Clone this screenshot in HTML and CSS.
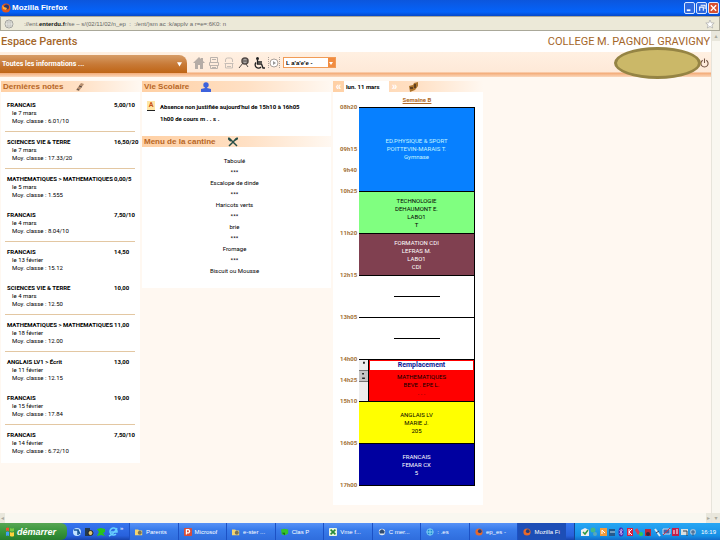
FILE: index.html
```html
<!DOCTYPE html>
<html lang="fr">
<head>
<meta charset="utf-8">
<title>Espace Parents</title>
<link rel="stylesheet" href="styles.css">
</head>
<body>
<header class="titlebar">
  <svg class="fox" viewBox="0 0 10 10"><circle cx="5" cy="5" r="4.5" fill="#e0571c"/><circle cx="5.5" cy="4" r="2.5" fill="#26386e"/><path d="M1 2l2 2 3 1-1 2-3-1z" fill="#ffb03b"/></svg>
  <span>Mozilla Firefox</span>
  <div class="winbtns">
    <button aria-label="Réduire"><svg viewBox="0 0 10 10"><path d="M2 7.5h4" stroke="#fff" stroke-width="2"/></svg></button>
    <button aria-label="Restaurer"><svg viewBox="0 0 10 10"><path d="M3 8V4h4v4M4 2h5v4" stroke="#fff" fill="none" stroke-width="1.2"/></svg></button>
    <button class="close" aria-label="Fermer"><svg viewBox="0 0 10 10"><path d="M2 2l6 6M8 2l-6 6" stroke="#fff" stroke-width="1.5"/></svg></button>
  </div>
</header>
<div class="urlbar">
  <svg class="globe" viewBox="0 0 10 10"><circle cx="5" cy="5" r="4" fill="#c4c4bf" stroke="#a5a5a0"/><path d="M5 1v8M1 5h8M3 2q-1 3 0 6M7 2q1 3 0 6" stroke="#f0f0ea" stroke-width=".6" fill="none"/></svg>
  <p class="url">://ent.<b>enterdu.f</b>r/se – s/(02/11/02/n_ep  :  :/ent/)sm ac :k/applv a r=e=:6K0: n</p>
  <svg class="star" viewBox="0 0 10 10"><path d="M5 1l1.2 2.8 3 .2-2.3 2 .8 3L5 7.4 2.3 9l.8-3L.8 4l3-.2z" fill="#fff" stroke="#aaa" stroke-width=".7"/></svg>
</div>
<div class="viewport">
  <div class="page">
    <div class="heading"><h1>Espace Parents</h1><p>COLLEGE M. PAGNOL GRAVIGNY</p></div>
    <nav class="toolbar">
      <button class="tab"><span>Toutes les informations ...</span><svg viewBox="0 0 6 6"><path d="M0 1h6L3 6z" fill="#fff"/></svg></button>
      <div class="tools">
        <svg viewBox="0 0 12 12"><path d="M6 0L0 6h2v6h3V8h2v4h3V6h2L10 4V1H8v1z" fill="#b5aca6"/></svg>
        <svg viewBox="0 0 12 12"><path d="M2.500 5V.5h7V5M1.500 5.500h9v3h-9zM2.500 8.500v3h7v-3M4 2.500h4M4 10.500h4" fill="none" stroke="#bbb3ad"/></svg>
        <svg viewBox="0 0 12 12"><path d="M2.500 5V3q0-2 2-2h3q2 0 2 2v2M1.500 6.500h9M2.500 7v4h7V7M4 9.500h4" fill="none" stroke="#c7beb7"/></svg>
        <svg viewBox="0 0 12 12"><circle cx="7" cy="4" r="3" fill="#fff" stroke="#504844" stroke-width="1.500"/><path d="M6 2v4M8 2v4M5 4h5M5 6L1 11M8 7l2 3" stroke="#504844"/></svg>
        <svg viewBox="0 0 12 12"><circle cx="4.500" cy="1.500" r="1.500" fill="#222"/><path d="M4.500 3v4h4l1.500 4h2M5 5h4M3 5.500a3.200 3.200 0 1 0 5 4.500" fill="none" stroke="#222" stroke-width="1.300"/></svg>
        <svg viewBox="0 0 12 12"><path d="M.5 0v12M11.500 0v12" stroke="#a9a099" stroke-dasharray="1 1"/><circle cx="6" cy="6" r="4" fill="#fff" stroke="#aaa199"/><path d="M5 4l3 2-3 2z" fill="#999"/></svg>
      </div>
      <div class="pickbox"><select class="pick" aria-label="Élève"><option>L a'a'e'e -</option></select><svg viewBox="0 0 6 6"><path d="M1 2h4L3 5z" fill="#fff"/></svg></div>
      <div class="account"><svg viewBox="0 0 10 10"><path d="M3 2a4 4 0 1 0 4 0M5 0v5" fill="none" stroke="#725342" stroke-width="1.200"/></svg><span class="mask"></span></div>
    </nav>
    <main class="columns">
      <section class="notes">
        <h2>Dernières notes <svg class="pen" viewBox="0 0 10 10"><path d="M1 8L6 1l3 1-5 7z" fill="#b78f70"/><path d="M2 7l2 1M4 4l3 1" stroke="#554a44"/></svg></h2>
        <ul class="card">
          <li><b>FRANCAIS</b><b>5,00/10</b><p>le 7 mars</p><p>Moy. classe : 6.01/10</p></li>
          <li><b>SCIENCES VIE &amp; TERRE</b><b>16,50/20</b><p>le 7 mars</p><p>Moy. classe : 17.33/20</p></li>
          <li class="plain"><b>MATHEMATIQUES &gt; MATHEMATIQUES</b><b>0,00/5</b><p>le 5 mars</p><p>Moy. classe : 1.555</p></li>
          <li><b>FRANCAIS</b><b>7,50/10</b><p>le 4 mars</p><p>Moy. classe : 8.04/10</p></li>
          <li class="plain"><b>FRANCAIS</b><b>14,50</b><p>le 13 février</p><p>Moy. classe : 15.12</p></li>
          <li><b>SCIENCES VIE &amp; TERRE</b><b>10,00</b><p>le 4 mars</p><p>Moy. classe : 12.50</p></li>
          <li><b>MATHEMATIQUES &gt; MATHEMATIQUES</b><b>11,00</b><p>le 18 février</p><p>Moy. classe : 12.00</p></li>
          <li class="plain"><b>ANGLAIS LV1 &gt; Écrit</b><b>13,00</b><p>le 11 février</p><p>Moy. classe : 12.15</p></li>
          <li><b>FRANCAIS</b><b>19,00</b><p>le 15 février</p><p>Moy. classe : 17.84</p></li>
          <li class="plain"><b>FRANCAIS</b><b>7,50/10</b><p>le 14 février</p><p>Moy. classe : 6.72/10</p></li>
        </ul>
      </section>
      <section class="middle">
        <h2>Vie Scolaire <svg viewBox="0 0 10 10"><circle cx="5" cy="3" r="2.700" fill="#3d62dc"/><path d="M4 5h2v1l4 1v3H0V7l4-1z" fill="#3d62dc"/></svg></h2>
        <div class="card absence"><span class="badge">A</span><div><b>Absence non justifiée aujourd'hui de 15h10 à 16h05</b><b>1h00 de cours m . . s .</b></div></div>
        <h2>Menu de la cantine <svg viewBox="0 0 10 10"><path d="M1 1l8 8M9 1L1 9" stroke="#264e47" stroke-width="1.500"/><path d="M0 1l3 3M7 3l3-2" stroke="#264e47" stroke-width="2"/></svg></h2>
        <div class="card menu"><p>Taboulé</p><p>***</p><p>Escalope de dinde</p><p>***</p><p>Haricots verts</p><p>***</p><p>brie</p><p>***</p><p>Fromage</p><p>***</p><p>Biscuit ou Mousse</p></div>
      </section>
      <section class="agenda">
        <div class="daybar"><button aria-label="Jour précédent">«</button><b>lun. 11 mars</b><button aria-label="Jour suivant">»</button><svg viewBox="0 0 10 10"><path d="M0 4l4-1 1-2 4-1v4L6 8 1 10z" fill="#ad742c"/><path d="M1 6h3M6 2v4" stroke="#63401f" stroke-width="2"/></svg></div>
        <div class="card">
          <div class="schedule">
            <a class="week" href="#">Semaine B</a>
            <div class="hours"><p>08h20</p><p>09h15<span>9h40</span></p><p>10h25</p><p>11h20</p><p>12h15</p><p>13h05</p><p>14h00<span>14h25</span></p><p>15h10</p><p>16h05</p><p>17h00</p></div>
            <div class="lessons">
              <div class="lesson double blue">ED.PHYSIQUE &amp; SPORT<br>POITTEVIN-MARAIS T.<br>Gymnase</div>
              <div class="lesson green">TECHNOLOGIE<br>DEHAUMONT E.<br>LABO1<br>T</div>
              <div class="lesson plum">FORMATION CDI<br>LEFRAS M.<br>LABO1<br>CDI</div>
              <div class="lesson free"><i></i></div>
              <div class="lesson free"><i></i></div>
              <div class="lesson split">
                <div class="ticks"><svg viewBox="0 0 9 11"><path d="M4 3h2" stroke="#222" stroke-width="2"/></svg><svg class="grey" viewBox="0 0 9 11"><path d="M3 3h2M3 8h3" stroke="#222" stroke-width="1.500"/></svg></div>
                <div class="red"><b>Remplacement</b>MATHEMATIQUES<br>BEVE . EPE L.<br>. . .</div>
              </div>
              <div class="lesson yellow">ANGLAIS LV<br>MARIE J.<br>205</div>
              <div class="lesson navy">FRANCAIS<br>FEMAR CX<br>5</div>
            </div>
          </div>
        </div>
      </section>
    </main>
  </div>
  <div class="vscroll"><span>▴</span><span>▾</span></div>
  <div class="hscroll"><span>◂</span><span>▸</span></div>
</div>
<footer class="taskbar">
  <button class="start"><svg viewBox="0 0 10 10"><path d="M1 1q2-1 3 0v3q-2-1-3 0z" fill="#f0532b"/><path d="M5 1q2 1 4 0v3q-2 1-4 0z" fill="#7ac943"/><path d="M1 5q2-1 3 0v4q-2-1-3 0z" fill="#42a0f2"/><path d="M5 5q2 1 4 0v4q-2 1-4 0z" fill="#ffd23b"/></svg>démarrer</button>
  <div class="quick">
    <svg viewBox="0 0 10 10"><circle cx="5" cy="5" r="4" fill="#c2e3ff"/><path d="M2 3h4v5M6 3l2 4" stroke="#17579b" fill="none" stroke-width="1.500"/></svg>
    <svg viewBox="0 0 10 10"><path d="M1 1h5v8H1z" fill="#243a4c"/><circle cx="6.500" cy="6" r="2.500" fill="#dcc878" stroke="#222"/></svg>
    <svg viewBox="0 0 10 10"><path d="M1 2l4-1 4 1v3L7 6l2 3-4-1-4 1 2-4z" fill="#29c31c"/></svg>
    <svg viewBox="0 0 10 10"><path d="M8 7a3.500 3.500 0 1 1 1-2H3M1 9Q6 7 9 1" fill="none" stroke="#68d0ff" stroke-width="1.500"/></svg>
    <span>»</span>
  </div>
  <div class="tasks">
    <button><svg viewBox="0 0 10 10"><path d="M0 2h4l1 1h4v6H0z" fill="#f4d670"/><circle cx="6" cy="6" r="2.500" fill="#7a7456"/></svg>Parents</button>
    <button><svg viewBox="0 0 10 10"><rect width="10" height="10" rx="1" fill="#d94d39"/><path d="M3 8V2h3q2 2 0 4H3" fill="none" stroke="#fff" stroke-width="1.500"/></svg>Microsof</button>
    <button><svg viewBox="0 0 10 10"><path d="M0 2h4l1 1h4v6H0z" fill="#f4d670"/><circle cx="6" cy="6" r="2.500" fill="#7a7456"/></svg>e-ster ...</button>
    <button><svg viewBox="0 0 10 10"><path d="M0 2l4-1 5 1v5L5 9 1 8z" fill="#35c52a"/><path d="M1 6h4v3" fill="#176e19"/></svg>Clas P</button>
    <button><svg viewBox="0 0 10 10"><rect width="10" height="10" rx="1" fill="#e8f4df"/><path d="M2 2l6 6M8 2L2 8" stroke="#268a3b" stroke-width="2"/></svg>Vme f...</button>
    <button><svg viewBox="0 0 10 10"><circle cx="5" cy="5" r="4" fill="#dfe9f3"/><path d="M2 4q3-5 6 0v3H2z" fill="#304c70"/></svg>C mer...</button>
    <button><svg viewBox="0 0 10 10"><circle cx="5" cy="5" r="4" fill="#1785cf" stroke="#8edaff"/><path d="M1 5h8M5 1v8" stroke="#a7e8ff"/></svg>: .es</button>
    <button><svg viewBox="0 0 10 10"><circle cx="5" cy="5" r="4.500" fill="#e7682a"/><circle cx="6" cy="4" r="2.300" fill="#283e79"/></svg>ep_es -</button>
    <button class="active"><svg viewBox="0 0 10 10"><circle cx="5" cy="5" r="4.500" fill="#e7682a"/><circle cx="6" cy="4" r="2.300" fill="#283e79"/></svg>Mozilla Fi</button>
  </div>
  <div class="tray">
    <svg viewBox="0 0 117 10"><path d="M0 3l4-2 4 2v6H0z" fill="#eee"/><path d="M2 5l2 2 3-4" stroke="#2b9946" fill="none" stroke-width="1.500"/><circle cx="12" cy="3" r="2.500" fill="#44b88a"/><circle cx="14" cy="7" r="2" fill="#5aa8ba"/><path d="M19 1h7v8h-7z" fill="#f39b3b"/><path d="M21 7V3l3 3" stroke="#fff" fill="none"/><path d="M28 2h6v7h-6z" fill="#24598c"/><path d="M29 5h5" stroke="#c3e3f3"/><ellipse cx="40" cy="5" rx="2.500" ry="4.500" fill="#4827b2"/><path d="M38.500 3l3 4-1.500 1V2l1.500 1-3 4" stroke="#e8d8ff" fill="none" stroke-width=".6"/><path d="M46 1h6v8h-6z" fill="#d72040"/><path d="M48 2v6M51 2l-3 3 3 3" stroke="#fff" fill="none"/><path d="M55 2l3 5" stroke="#d6405b" stroke-width="3"/><circle cx="60" cy="7" r="2" fill="#34ca50"/><path d="M64 2h6v7h-6z" fill="#bd2739"/><circle cx="67" cy="7" r="2" fill="#382840"/><path d="M74 2l5 7" stroke="#dceaf1" stroke-width="2"/><path d="M75 6l3-2" stroke="#353b60"/><path d="M82 2h7v5h-7z" fill="#4066ae" stroke="#cbd6e9"/><path d="M82 8l7-7" stroke="#ce3245"/><path d="M91 1h7v8h-7z" fill="#c31f4b"/><path d="M93 3v4M96 2v5" stroke="#fff"/><path d="M100 2h7v6h-7z" fill="#d9dfdf"/><path d="M102 4h4v5" stroke="#3b4250" fill="none"/><circle cx="112" cy="5" r="3" fill="#9cbdd9"/><path d="M110 5h4M112 3v6" stroke="#395d85"/></svg>
    <span>16:19</span>
  </div>
</footer>
</body>
</html>
```

FILE: styles.css
```css
* { box-sizing: border-box; }
body, h1, h2, p, ul { margin: 0; padding: 0; }
body {
  min-height: 100vh;
  display: flex;
  flex-direction: column;
  font: 6px/8px Roboto, "Liberation Sans", sans-serif;
  color: #000;
  background: #fff8f1;
}
button { border: 0; padding: 0; margin: 0; background: none; color: inherit; font: inherit; }
svg { display: block; flex: none; width: 10px; height: 10px; }

.titlebar {
  display: flex;
  align-items: center;
  gap: 1px;
  height: 16px;
  padding: 0 1px;
  color: #fff;
  font: bold 8px/10px "Liberation Sans", sans-serif;
  background: linear-gradient(#0c56dc, #0463fa 75%, #0648c8);
}
.titlebar span { flex: 1; }
.winbtns { display: flex; gap: 1px; }
.winbtns button { width: 11px; height: 12px; border: 1px solid #dce8ff; border-radius: 2px; background: #2e69df; }
.winbtns svg { width: 9px; height: 10px; }
.winbtns .close { background: #d65031; }

.urlbar {
  display: flex;
  align-items: center;
  height: 15px;
  padding: 0 4px 0 3px;
  gap: 10px;
  color: #666;
  font: 6px/10px "Liberation Sans", sans-serif;
  background: #ece9d8;
  border: 1px solid #aaa899;
}
.url { flex: 1; white-space: pre; }
.url b { color: #111; }

.viewport { flex: 1; display: grid; grid-template-columns: 1fr 9px; grid-template-rows: 1fr 10px; }
.page { background: #fff8f1; min-width: 0; }
.heading {
  display: flex;
  justify-content: space-between;
  height: 21px;
  padding: 0 1px;
  color: #a4662a;
  background: #fff;
  font: 11px/22px Roboto, "Liberation Sans", sans-serif;
}
.heading h1 { font-size: 11px; font-weight: 500; }
.toolbar {
  display: flex;
  align-items: center;
  height: 25px;
  padding-bottom: 4px;
  background: linear-gradient(#fff0e2, #fee9d8 20px, #f3aa76 21px, #fbd8bc);
}
.tab {
  align-self: flex-end;
  display: flex;
  align-items: center;
  justify-content: space-between;
  width: 187px;
  height: 18px;
  padding: 0 5px 0 2px;
  border-radius: 0 8px 0 0;
  color: #fff;
  font: bold 7px/10px Roboto, "Liberation Sans", sans-serif;
  background: linear-gradient(#d79d68, #c87b38 50%, #bf6415);
}
.tab svg { width: 5px; height: 6px; }
.tools { display: flex; gap: 3px; margin-left: 6px; }
.tools svg { width: 12px; height: 12px; }
.pickbox {
  display: flex;
  align-items: center;
  width: 53px;
  height: 11px;
  margin-left: 3px;
  padding-right: 1px;
  border: 1px solid #f19b56;
  background: #f18c40;
}
.pick {
  appearance: none;
  flex: 1;
  height: 9px;
  padding: 0 2px;
  border: 0;
  border-radius: 0;
  font: bold 6px/8px "Liberation Sans", sans-serif;
  background: #fff;
}
.pickbox svg { width: 6px; height: 6px; }
.account { position: relative; margin-left: auto; padding-right: 2px; }
.account svg { width: 9px; height: 10px; }
.mask {
  position: absolute;
  right: 10px;
  top: -11px;
  width: 87px;
  height: 32px;
  border: 3px solid #958444;
  border-radius: 50%;
  background: #cbb868;
}

.columns { display: grid; grid-template-columns: 139px 189px 150px; gap: 2px; padding: 4px 1px 8px; align-items: start; }
h2 {
  display: flex;
  align-items: center;
  gap: 12px;
  height: 11px;
  padding-left: 2px;
  color: #b76625;
  font: bold 8px/11px "Liberation Sans", sans-serif;
  background: linear-gradient(90deg, #ffd0a4, #ffe0c4 55%, #fff8f1);
}
.card { background: #fff; }
ul.card { list-style: none; padding: 3px 5px 2px 4px; }
.notes li {
  display: grid;
  grid-template-columns: 107px 1fr;
  height: 37px;
  padding: 6px 0 6px 2px;
  border-bottom: 1px solid #e3c7a2;
  white-space: nowrap;
}
.notes li.plain { height: 36px; border-bottom: 0; }
.notes p { grid-column: 1 / 3; padding-left: 5px; }
.absence { display: flex; gap: 5px; height: 44px; padding: 9px 5px; }
.absence b { display: block; line-height: 12px; white-space: nowrap; }
.badge { width: 8px; height: 10px; text-align: center; font-weight: bold; font-size: 7px; color: #c75516; background: #ffe6a6; border-bottom: 1px solid #222; }
.menu { padding: 8px 4px 11px 0; text-align: center; line-height: 11px; }
.menu p { height: 11px; }
.menu p:last-child { height: 12px; }

.daybar { display: flex; height: 11px; align-items: center; background: linear-gradient(90deg, #ffd0a4, #ffe0c4 55%, #fff8f1); }
.daybar button { width: 11px; color: #fff; font: bold 10px/9px "Liberation Sans", sans-serif; }
.daybar b { width: 45px; padding-left: 2px; line-height: 11px; background: #fff; }
.daybar svg { margin-left: 9px; }
.agenda .card { padding: 4px 8px 16px 7px; }
.schedule { display: grid; grid-template-columns: 19px 1fr; align-items: start; }
.week { grid-column: 2; justify-self: center; height: 11px; color: #b06b29; font-weight: bold; }
.hours { color: #a27035; font-weight: bold; text-align: right; padding-right: 2px; margin-top: -4px; }
.hours p { height: 42px; }
.hours p:last-child { height: 8px; }
.hours span { display: block; padding-top: 13px; }
.lessons { border-top: 1px solid #000; border-right: 1px solid #000; }
.lesson { height: 42px; padding-top: 5px; border-bottom: 1px solid #000; text-align: center; overflow: hidden; }
.double { height: 84px; padding-top: 29px; }
.blue { color: #c4f4ff; background: #0780ff; }
.green { background: #80ff80; }
.plum { color: #fff; background: #804050; }
.free { display: flex; justify-content: center; padding-top: 20px; background: #fff; }
.free i { width: 46px; height: 1px; background: #000; }
.yellow { padding-top: 9px; background: #ff0; }
.navy { padding-top: 9px; color: #fff; background: #0000a0; }
.split { display: flex; padding: 0; }
.ticks { width: 10px; border-right: 1px solid #000; background: #eee; }
.ticks svg { width: 9px; height: 11px; border-bottom: 1px solid #777; }
.ticks .grey { background: #c5c5c5; }
.red { flex: 1; background: #f00; }
.red b { display: block; height: 9px; margin: 1px 1px 3px; color: #0b1594; font-size: 7px; line-height: 9px; background: #fff; }

.vscroll, .hscroll { display: flex; justify-content: space-between; color: #aaa99d; background: #f9f7f0; font: 6px/8px "DejaVu Sans", sans-serif; }
.vscroll { grid-row: 1 / 3; grid-column: 2; flex-direction: column; text-align: center; border-left: 1px solid #e7e4db; }
.vscroll span, .hscroll span { padding: 1px; background: #e9e7dc; }

.taskbar { display: flex; height: 17px; color: #fff; background: linear-gradient(#3675ef, #2861dc 75%, #1744ad); font: 6px/10px "Liberation Sans", sans-serif; }
.start {
  display: flex;
  align-items: center;
  gap: 2px;
  width: 67px;
  padding-left: 5px;
  border-radius: 0 6px 6px 0;
  font: italic bold 9px/12px "Liberation Sans", sans-serif;
  background: linear-gradient(#58a654, #38963b 50%, #277d2d);
}
.quick { display: flex; align-items: center; gap: 2px; width: 62px; padding-left: 5px; }
.quick span { align-self: flex-start; }
.tasks { flex: 1; display: grid; grid-template-columns: repeat(9, 1fr); padding-right: 8px; }
.tasks button { display: flex; align-items: center; gap: 3px; min-width: 0; overflow: hidden; padding-left: 5px; border-left: 1px solid #1c51c5; white-space: nowrap; background: linear-gradient(#5792f7, #397bea 40%, #2f6ddd); }
.tasks svg { width: 8px; height: 8px; }
.tasks .active { background: #1d4eb6; }
.tray { display: flex; align-items: center; gap: 3px; width: 146px; padding-left: 6px; border-left: 1px solid #134697; background: linear-gradient(#28a7f4, #168fe5 75%, #126dcb); }
.tray svg { width: 117px; height: 10px; }
```
